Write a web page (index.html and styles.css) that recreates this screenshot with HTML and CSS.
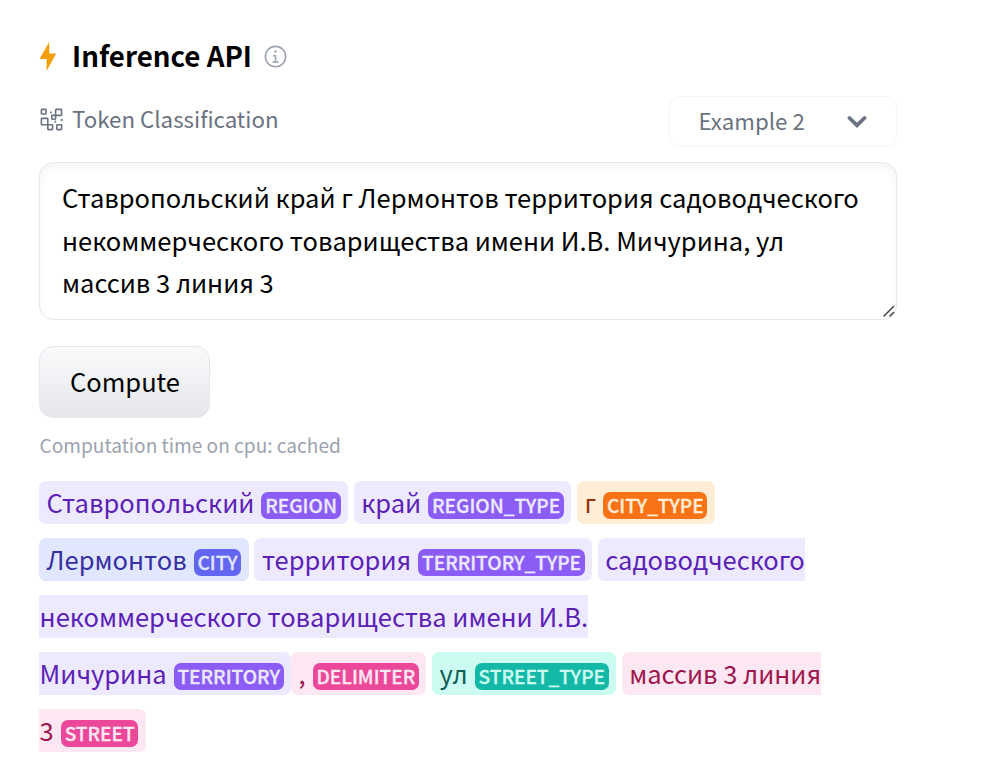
FILE: index.html
```html
<!DOCTYPE html>
<html lang="ru">
<head>
<meta charset="utf-8">
<title>Inference API</title>
<link rel="stylesheet" href="styles.css">
</head>
<body>
<main class="widget">
  <header class="heading">
    <svg class="bolt" viewBox="0 0 18 30"><path d="M10.2 0 L0.5 17 H7.6 V29 L17.2 11.5 H10.2 Z"/></svg>
    <h1>Inference API</h1>
    <svg class="info" viewBox="0 0 32 32"><path d="M17 22v-8h-4v2h2v6h-3v2h8v-2z"/><path d="M16 8a1.5 1.5 0 1 0 1.5 1.5A1.5 1.5 0 0 0 16 8z"/><path d="M16 30a14 14 0 1 1 14-14 14 14 0 0 1-14 14zm0-26a12 12 0 1 0 12 12A12 12 0 0 0 16 4z"/></svg>
  </header>
  <div class="task-row">
    <div class="task">
      <svg class="task-icon" viewBox="0 0 23 23"><g><rect x="1.4" y="1.4" width="4.6" height="4.6" rx=".6"/><rect x="15.6" y="1.4" width="6" height="6" rx=".6"/><rect x="11.8" y="7.4" width="3.8" height="3.8" rx=".6"/><rect x="1.4" y="10.4" width="6.4" height="6.4" rx=".6"/><rect x="7.8" y="16.8" width="4.8" height="4.8" rx=".6"/><rect x="16.8" y="16.8" width="4.8" height="4.8" rx=".6"/></g><path d="M10 3.5h1.8v1.8H10zM14.4 12.7h1.8v1.8h-1.8zM20.8 11.1h1.8v1.8h-1.8z"/></svg>
      <span>Token Classification</span>
    </div>
    <button class="select"><span>Example 2</span><svg class="chevron" viewBox="0 0 20 14"><path d="M2.5 3 L10 10.3 L17.5 3"/></svg></button>
  </div>
  <div class="input">
    <div>Ставропольский край г Лермонтов территория садоводческого</div>
    <div>некоммерческого товарищества имени И.В. Мичурина, ул</div>
    <div>массив 3 линия 3</div>
    <svg class="grip" viewBox="0 0 14 14"><path d="M1.5 12.5 L12 2 M7.5 12.5 L12 8"/></svg>
  </div>
  <button class="compute">Compute</button>
  <p class="timing">Computation time on cpu: cached</p>
  <div class="output">
    <div><span class="token violet">Ставропольский<b>REGION</b></span> <span class="token violet">край<b>REGION_TYPE</b></span> <span class="token orange">г<b>CITY_TYPE</b></span></div>
    <div><span class="token indigo">Лермонтов<b>CITY</b></span> <span class="token violet">территория<b>TERRITORY_TYPE</b></span> <span class="token violet open-end">садоводческого</span></div>
    <div><span class="token violet open-start open-end">некоммерческого товарищества имени И.В.</span></div>
    <div><span class="token violet open-start">Мичурина<b>TERRITORY</b></span><span class="token pink">,<b>DELIMITER</b></span> <span class="token teal">ул<b>STREET_TYPE</b></span> <span class="token pink open-end">массив 3 линия</span></div>
    <div><span class="token pink open-start">3<b>STREET</b></span></div>
  </div>
</main>
</body>
</html>
```
FILE: styles.css
```css
* { box-sizing: border-box; }
body {
  margin: 0;
  background: #fff;
  color: #000;
  font-family: "Noto Sans CJK SC", "Noto Sans", sans-serif;
}
button { font-family: inherit; }
.widget { width: 858px; margin-left: 39px; padding-top: 36px; }
.heading { display: flex; align-items: center; height: 41px; }
.bolt { width: 18px; height: 30px; fill: #f59e0b; }
.heading h1 { width: 181px; margin: 0 10px 0 15px; padding-bottom: 3px; font-size: 27.7px; font-weight: 700; line-height: 38px; white-space: nowrap; }
.info { width: 25px; height: 25px; fill: #9ca3af; }
.task-row { display: flex; justify-content: space-between; height: 51px; margin-top: 19px; }
.task { display: flex; align-items: center; height: 47px; color: #6b7280; font-size: 22.3px; }
.task span, .select span { padding-bottom: 4px; }
.task-icon { width: 23px; height: 23px; margin: 0 9px 0 1px; fill: #6b7280; }
.task-icon g { fill: none; stroke: #6b7280; stroke-width: 1.6; }
.select {
  display: flex; align-items: center; justify-content: space-between;
  width: 228px; height: 51px; padding: 0 29px 0 28.5px;
  border: 1px solid #f3f4f6; border-radius: 11px; background: #fff;
  color: #6b7280; font-size: 22.3px;
}
.chevron { width: 20px; height: 14px; fill: none; stroke: #6b7280; stroke-width: 3.8; stroke-linecap: round; }
.input {
  position: relative; height: 158px; margin-top: 15px; padding: 13px 22px;
  border: 1px solid #e5e7eb; border-radius: 14px;
  box-shadow: inset 0 4px 7px rgba(0, 0, 0, .05);
  font-size: 25.5px; line-height: 42.7px; white-space: nowrap;
}
.grip { position: absolute; right: 0; bottom: 1px; width: 14px; height: 14px; fill: none; stroke: #444; stroke-width: 1.5; }
.compute {
  display: block; width: 171px; height: 72px; margin-top: 26px; padding: 0 0 4px 1px;
  border: 1px solid #e5e7eb; border-radius: 14px;
  background: linear-gradient(#f9fafb, #e5e7eb);
  font-size: 25.5px;
}
.timing { margin: 12px 0 0 .6px; color: #9ca3af; font-size: 19.1px; line-height: 30px; }
.output { margin-top: 13px; font-size: 25.5px; line-height: 57px; white-space: nowrap; }
.output > div { height: 57px; }
.token { padding: 2px 7.1px 4px 7.6px; border-radius: 7px; }
.token b {
  display: inline-block; height: 27px; margin-left: 7.1px; padding: 0 3.8px;
  border-radius: 7px; font-size: 19.1px; font-weight: 500; line-height: 26px;
  -webkit-text-stroke: .3px currentColor;
}
.open-start { padding-left: .6px; border-top-left-radius: 0; border-bottom-left-radius: 0; }
.open-end { padding-right: 0; border-top-right-radius: 0; border-bottom-right-radius: 0; }
.violet { background: #ede9fe; color: #5b21b6; }
.violet b { background: #8b5cf6; color: #ede9fe; }
.orange { background: #ffedd5; color: #9a3412; }
.orange b { background: #f97316; color: #ffedd5; }
.indigo { background: #e0e7ff; color: #3730a3; }
.indigo b { background: #6366f1; color: #e0e7ff; }
.pink { background: #fce7f3; color: #9d174d; }
.pink b { background: #ec4899; color: #fce7f3; }
.teal { background: #ccfbf1; color: #115e59; }
.teal b { background: #14b8a6; color: #ccfbf1; }
```
